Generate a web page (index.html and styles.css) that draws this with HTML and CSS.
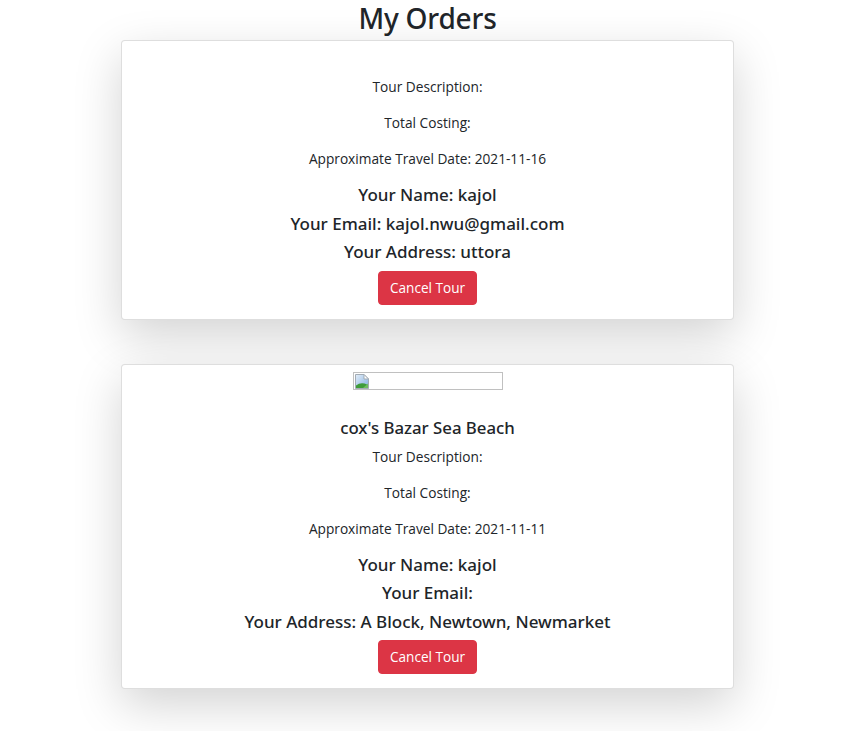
FILE: index.html
```html
<!DOCTYPE html>
<html lang="en">
<head>
<meta charset="utf-8">
<title>My Orders</title>
<link rel="stylesheet" href="styles.css">
</head>
<body>
<div class="page">
  <h2 class="page-title">My Orders</h2>

  <div class="card">
    <div class="card-head-empty"></div>
    <p class="info">Tour Description:</p>
    <p class="info">Total Costing:</p>
    <p class="info">Approximate Travel Date: 2021-11-16</p>
    <div class="details">
      <h5 class="detail">Your Name: kajol</h5>
      <h5 class="detail">Your Email: kajol.nwu@gmail.com</h5>
      <h5 class="detail">Your Address: uttora</h5>
    </div>
    <button class="btn-danger" type="button">Cancel Tour</button>
  </div>

  <div class="card">
    <div class="broken-img">
      <svg width="16" height="16" viewBox="0 0 16 16" aria-hidden="true">
        <defs>
          <linearGradient id="sky" x1="0" y1="0" x2="1" y2="1">
            <stop offset="0" stop-color="#e4eef9"/>
            <stop offset="1" stop-color="#7faee0"/>
          </linearGradient>
        </defs>
        <path d="M1.5 1.5 H10 L14.5 6 V15.5 H1.5 Z" fill="url(#sky)" stroke="#a3acb5" stroke-width="1"/>
        <path d="M10 1.5 V6 H14.5 Z" fill="#ffffff" stroke="#a3acb5" stroke-width="1" stroke-linejoin="round"/>
        <path d="M2 15 V12.5 Q7 8.5 13 11.5 L14 12 V15 Z" fill="#3f9c3a"/>
        <path d="M9 15 L14 10.5 V15 Z" fill="#6fbf5f"/>
      </svg>
    </div>
    <h5 class="card-title">cox's Bazar Sea Beach</h5>
    <p class="info">Tour Description:</p>
    <p class="info">Total Costing:</p>
    <p class="info">Approximate Travel Date: 2021-11-11</p>
    <div class="details">
      <h5 class="detail">Your Name: kajol</h5>
      <h5 class="detail">Your Email: </h5>
      <h5 class="detail">Your Address: A Block, Newtown, Newmarket</h5>
    </div>
    <button class="btn-danger" type="button">Cancel Tour</button>
  </div>
</div>
</body>
</html>
```

FILE: styles.css
```css
html, body {
  margin: 0;
  padding: 0;
  background: #fff;
}

body {
  font-family: "Open Sans", "Noto Sans", "Liberation Sans", sans-serif;
  color: #212529;
}

.page {
  width: 855px;
  display: flex;
  flex-direction: column;
  align-items: center;
}

.page-title {
  margin: 0;
  padding-top: 2px;
  height: 34px;
  font-family: "Noto Sans", "Open Sans", sans-serif;
  font-size: 28px;
  line-height: 32px;
  font-weight: 500;
  letter-spacing: -0.2px;
}

.card {
  box-sizing: border-box;
  width: 613px;
  margin-top: 4px;
  margin-bottom: 42px;
  padding: 7px 16px 14px;
  border: 1px solid rgba(0, 0, 0, 0.13);
  border-radius: 4px;
  background: #fff;
  box-shadow: 0 16px 48px rgba(0, 0, 0, 0.175);
  display: flex;
  flex-direction: column;
  align-items: center;
  text-align: center;
}

.card + .card {
  margin-top: 2px;
}

.card-head-empty {
  height: 29px;
}

.broken-img {
  box-sizing: border-box;
  width: 150px;
  height: 18px;
  border: 1px solid #c0c0c0;
  display: flex;
  align-items: center;
}

.broken-img svg {
  display: block;
}

.card-title {
  margin: 26px 0 7px;
  font-family: "Noto Sans", "Open Sans", sans-serif;
  font-size: 16.8px;
  line-height: 24px;
  font-weight: 500;
}

.info {
  margin: 0 0 16px;
  font-size: 13.7px;
  line-height: 20px;
  font-weight: 400;
}

.details {
  margin-top: -4px;
  display: flex;
  flex-direction: column;
  align-items: center;
}

.detail {
  margin: 0;
  font-family: "Noto Sans", "Open Sans", sans-serif;
  font-size: 17px;
  line-height: 28.5px;
  font-weight: 500;
}

.btn-danger {
  margin-top: 4px;
  height: 34px;
  padding: 0 11px;
  border: 1px solid #dc3545;
  border-radius: 4px;
  background: #dc3545;
  color: #fff;
  font-family: inherit;
  font-size: 13.6px;
  line-height: 22px;
  cursor: pointer;
}
```
